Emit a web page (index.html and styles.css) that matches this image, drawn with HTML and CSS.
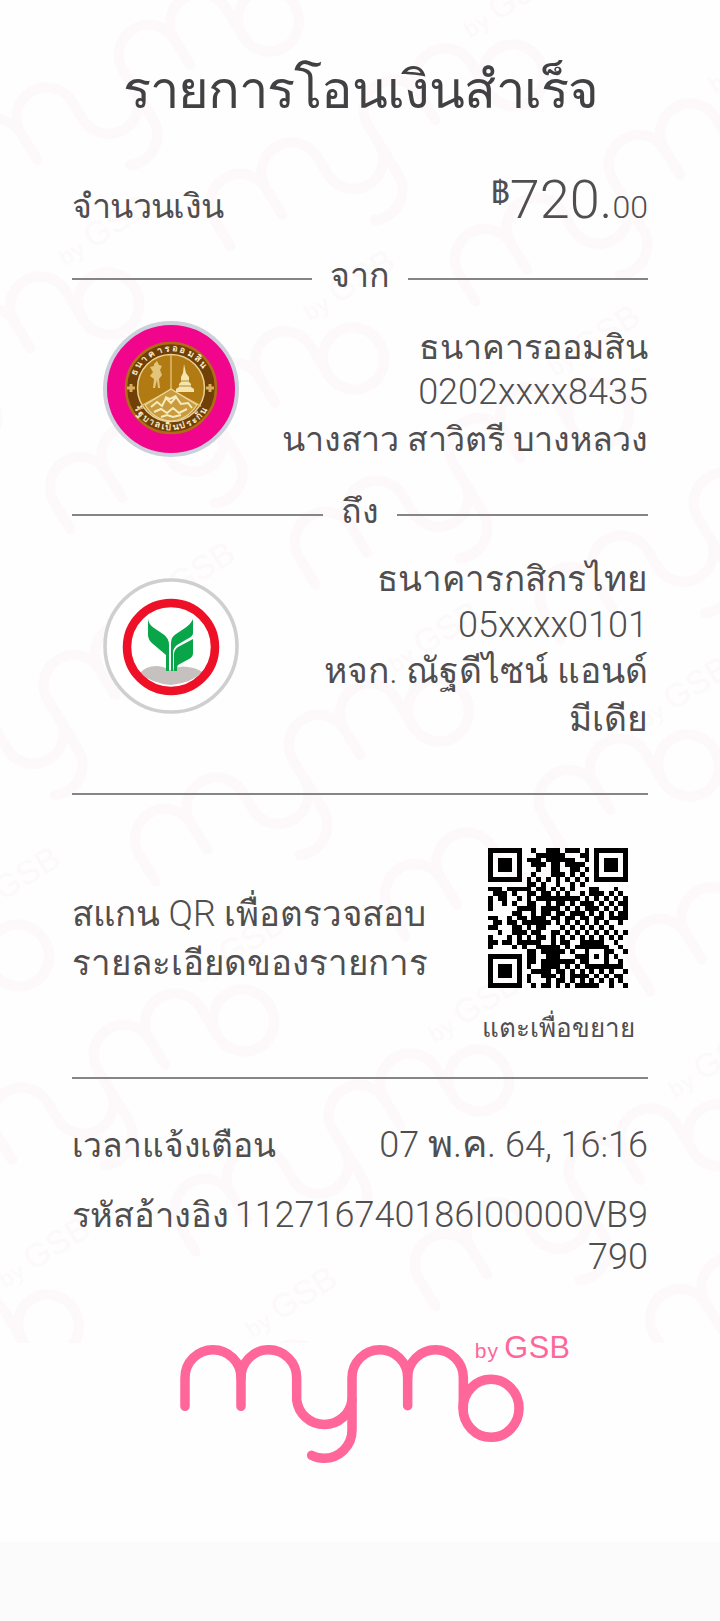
FILE: index.html
```
<!DOCTYPE html>
<html lang="th">
<head>
<meta charset="utf-8">
<title>รายการโอนเงินสำเร็จ</title>
<link rel="stylesheet" href="styles.css">
</head>
<body>
<svg class="defs" width="0" height="0" aria-hidden="true">
  <defs>
    <g id="mymo">
      <g fill="none" stroke="currentColor" stroke-width="28.5" stroke-linecap="round">
        <path d="M45 256V170a84 84 0 0 1 168 0V256"/>
        <path d="M213 170a83.500 83.500 0 0 1 167 0V236a83.500 83.500 0 0 0 166 0"/>
        <path d="M713 254V170a83.500 83.500 0 0 0-167 0V328a84 84 0 0 1-84 84q-20 0-37-9"/>
        <path d="M713 170a83.500 83.500 0 0 1 167 0V262"/>
        <ellipse cx="963" cy="262" rx="84" ry="87"/>
      </g>
      <g fill="currentColor" font-family="'Liberation Sans', Arial, sans-serif" font-weight="400">
        <text x="914" y="111" font-size="63" textLength="70">by</text>
        <text x="1003" y="110" font-size="92" textLength="197">GSB</text>
      </g>
    </g>
  </defs>
</svg>
<main class="slip">
  <svg class="watermark" viewBox="0 0 720 1343" aria-hidden="true"></svg>
  <h1 class="title">รายการโอนเงินสำเร็จ</h1>

  <div class="row amount">
    <span class="label">จำนวนเงิน</span>
    <span class="value"><span class="baht">฿</span><span class="whole">720.</span><span class="satang">00</span></span>
  </div>

  <div class="divider from"><span>จาก</span></div>

  <section class="party sender">
    <svg class="bank" viewBox="0 0 136 136">
      <circle cx="68" cy="68" r="66" fill="#f0058c" stroke="#cbd0db" stroke-width="4"/>
      <circle cx="68" cy="67" r="45" fill="#714006" stroke="#b06c14" stroke-width="2.500"/>
      <circle cx="68" cy="67" r="33.500" fill="#b17a12" stroke="#ead196" stroke-width="1.500"/>
      <path d="M68 34V69L38 85M68 69L98 85" fill="none" stroke="#dfbd6c" stroke-width="1.500"/>
      <path d="M68 68L94 84Q84 99 68 100Q51 99 42 84Z" fill="#c99b3c" stroke="#ead9a0" stroke-width="1.200"/>
      <path d="M48 86l6-5 5 4 4-8 5 5 5-6 5 7 7-1 4 5M51 91l7-3 6 4 6-5 6 5 8-4M58 96l6-2 6 2 8-2M62 76l5 2 6-3" fill="none" stroke="#f6ebbd" stroke-width="2"/>
      <path d="M81 43l2 9 3 4v5l2 2v3l3 2v3H73v-3l3-2v-3l2-2v-5l2-4Z" fill="#f3e5ad"/>
      <path d="M75 65h13M77 60h9" stroke="#b78a31"/>
      <path d="M51 43l3-3 2 4 3 1-2 4 2 5-3 4 1 9h-2l-1-8-2 8h-2l1-9-4-3 3-4-3-5 4-1Z" fill="#e2c57b"/>
      <path d="M24 67h8M28 63v8M103 67h8M107 63v8" stroke="#d9ad5c" stroke-width="3"/>
      <path id="sealTop" d="M33 55A37.500 37.500 0 0 1 103 54" fill="none"/>
      <path id="sealBottom" d="M31 87A42 42 0 0 0 105 87" fill="none"/>
      <text class="seal"><textPath href="#sealTop" textLength="83">ธนาคารออมสิน</textPath></text>
      <text class="seal"><textPath href="#sealBottom" textLength="88">รัฐบาลเป็นประกัน</textPath></text>
    </svg>
    <div class="details">
      <p class="thai">ธนาคารออมสิน</p>
      <p class="number">0202xxxx8435</p>
      <p class="thai owner">นางสาว สาวิตรี บางหลวง</p>
    </div>
  </section>

  <div class="divider to"><span>ถึง</span></div>

  <section class="party receiver">
    <svg class="bank" viewBox="0 0 136 136">
      <circle cx="68" cy="68" r="66" fill="#fff" stroke="#cfcfcf" stroke-width="3.600"/>
      <path d="M37 95q6-7 16-7 7 0 14 4 9-5 18-3 9 1 14 5Q89 105 68 107 48 105 37 95Z" fill="#c6c1bf"/>
      <circle cx="68" cy="69" r="44" fill="none" stroke="#ed1026" stroke-width="8.500"/>
      <path d="M45 41q1 6 6 9l9 6q6 4 6 11V93H63V77L50 66q-5-4-5-9Z" fill="#08a649"/>
      <path d="M90 41v14q0 3-4 5l-12 7q-4 3-4 8v18h-2V65q0-6 5-9l9-6q6-4 8-9Z" fill="#08a649"/>
      <path d="M90 61v14q0 4-4 6l-11 6q-1 1-1 6h-3V76q0-4 4-7Z" fill="#08a649"/>
    </svg>
    <div class="details">
      <p class="thai">ธนาคารกสิกรไทย</p>
      <p class="number">05xxxx0101</p>
      <p class="thai owner">หจก. ณัฐดีไซน์ แอนด์<br>มีเดีย</p>
    </div>
  </section>

  <section class="scan">
    <p class="scan-text">สแกน <span class="latin">QR</span> เพื่อตรวจสอบ<br>รายละเอียดของรายการ</p>
    <div class="qr-box">
      <svg class="qr" viewBox="0 0 29 29" shape-rendering="crispEdges"></svg>
      <p class="hint">แตะเพื่อขยาย</p>
    </div>
  </section>

  <div class="row time">
    <span class="label">เวลาแจ้งเตือน</span>
    <span class="value">07 <span class="thai-part">พ.ค.</span> 64, 16:16</span>
  </div>
  <div class="row ref">
    <span class="label">รหัสอ้างอิง</span>
    <span class="value">112716740186I00000VB9<br>790</span>
  </div>

  <svg class="logo" viewBox="0 0 1230 480"><use href="#mymo"/></svg>
</main>
<script src="script.js"></script>
</body>
</html>
```
FILE: styles.css
```
* { box-sizing: border-box; }
body {
  margin: 0;
  background: #fbfbfb;
  color: #504e4f;
  font-family: Roboto, sans-serif;
  font-weight: 300;
  font-size: 36px;
}
h1, p { margin: 0; font-weight: inherit; }
.defs { position: absolute; }
.slip {
  position: relative;
  height: 1542px;
  padding: 52px 72px 0;
  background: #fefefe;
  overflow: hidden;
}
.watermark {
  position: absolute;
  left: 0;
  top: 0;
  width: 720px;
  height: 1343px;
  color: #fdf9fa;
}
.watermark text { opacity: .7; }
.title {
  position: relative;
  height: 112px;
  font-size: 52.5px;
  letter-spacing: -1px;
  line-height: 76px;
  text-align: center;
  color: #414042;
  white-space: nowrap;
}
.row, .divider, .party, .scan, .logo { position: relative; }
.row {
  display: flex;
  justify-content: space-between;
  align-items: baseline;
  white-space: nowrap;
}
.label, .thai, .divider { font-size: 34px; }
.value { text-align: right; }
.amount { height: 84px; line-height: 72px; }
.amount .label { letter-spacing: -.7px; }
.baht { font-size: 31px; vertical-align: 15px; line-height: 1; }
.whole { font-size: 54px; }
.satang { font-size: 32px; }
.divider {
  display: flex;
  align-items: center;
  gap: 18px;
  height: 62px;
  line-height: 52px;
}
.divider span { padding-bottom: 8px; }
.divider::before, .divider::after {
  content: "";
  flex: 1;
  height: 2px;
  background: #858585;
}
.party {
  display: flex;
  justify-content: space-between;
  padding-left: 31px;
}
.bank { width: 136px; height: 136px; flex: none; }
.seal { font-size: 9px; font-weight: 700; fill: #f8e9c9; }
.details { text-align: right; white-space: nowrap; }
.thai { line-height: 48px; }
.number { line-height: 43px; }
.sender { height: 174px; padding-top: 11px; }
.sender .details { padding-top: 2px; }
.sender .owner { padding-top: 1px; letter-spacing: -.25px; }
.receiver { height: 247px; padding-top: 9px; }
.receiver .bank { margin-top: 23px; }
.receiver .details { padding-top: 1px; }
.receiver .thai { font-size: 35px; }
.receiver .owner { font-size: 35.4px; }
.scan {
  display: flex;
  justify-content: space-between;
  height: 286px;
  border-top: 2px solid #858585;
  border-bottom: 2px solid #858585;
}
.scan-text { padding-top: 95px; font-size: 34.9px; line-height: 49px; white-space: nowrap; }
.latin { font-size: 36px; }
.qr-box {
  display: flex;
  flex-direction: column;
  align-items: center;
  width: 180px;
  padding-top: 53px;
}
.qr { width: 140px; height: 140px; }
.hint { margin-top: 21px; font-size: 26px; line-height: 38px; white-space: nowrap; }
.time { height: 73px; margin-top: 40px; line-height: 52px; }
.time .label { font-size: 33.6px; }
.thai-part { font-size: 38px; line-height: 1; }
.ref { height: 129px; line-height: 42px; padding-top: 2px; }
.ref .label { font-size: 34.4px; }
.logo {
  display: block;
  width: 410px;
  height: 160px;
  margin-left: 98px;
  color: #ff6699;
}
```
FILE: script.js
```
// Dark modules, one string per row.
const rows = [
  "11111110010011101110101111111",
  "10000010001111110001101000001",
  "10111010111011111100101011101",
  "10111010011101101111001011101",
  "10111010001001100110101011101",
  "10000010010001110101001000001",
  "11111110101010101010101111111",
  "00000000110100100101000000000",
  "11101111101101010100011000100",
  "01110100110110101001011101010",
  "10110010101111111110101010101",
  "10010100110010110101110101011",
  "10000011110111101010111010101",
  "00000110010110110111010101011",
  "11001011011101101101101101111",
  "01101101111110101010101010010",
  "11000110101100010101010101000",
  "00100111011001101010101010101",
  "10001010101101010101010101010",
  "11011011111001011001111100100",
  "10000101001111101011111110010",
  "00000000110111110100100011001",
  "11111110110011100011101010100",
  "10000010110111111101100010010",
  "10111010100111101010111111110",
  "10111010011110110101010101001",
  "10111010100111010111101010110",
  "10000010100010110101010101010",
  "11111110010110101011111001001"
];
rows[1] = "1000001" + rows[1].slice(7);
let d = "";
rows.forEach((row, y) => {
  for (const run of row.matchAll(/1+/g)) {
    const n = run[0].length;
    d += `M${run.index} ${y}h${n}v1h-${n}z`;
  }
});
document.querySelector(".qr").innerHTML = `<path d="${d}"/>`;

// Centre of the "by GSB" corner of each background logo.
const marks = [
  [265, -50], [510, 5], [755, 60],
  [105, 233], [350, 288], [595, 343], [840, 398],
  [190, 580], [435, 640], [685, 695], [930, 750],
  [15, 885], [240, 950], [475, 1010], [715, 1065], [950, 1120],
  [45, 1255], [292, 1305], [790, 1415]
];
document.querySelector(".watermark").innerHTML = marks.map(([x, y]) =>
  `<use href="#mymo" transform="translate(${x} ${y}) rotate(-31.5) scale(.36) translate(-1057 -90)"/>`
).join("");
```
